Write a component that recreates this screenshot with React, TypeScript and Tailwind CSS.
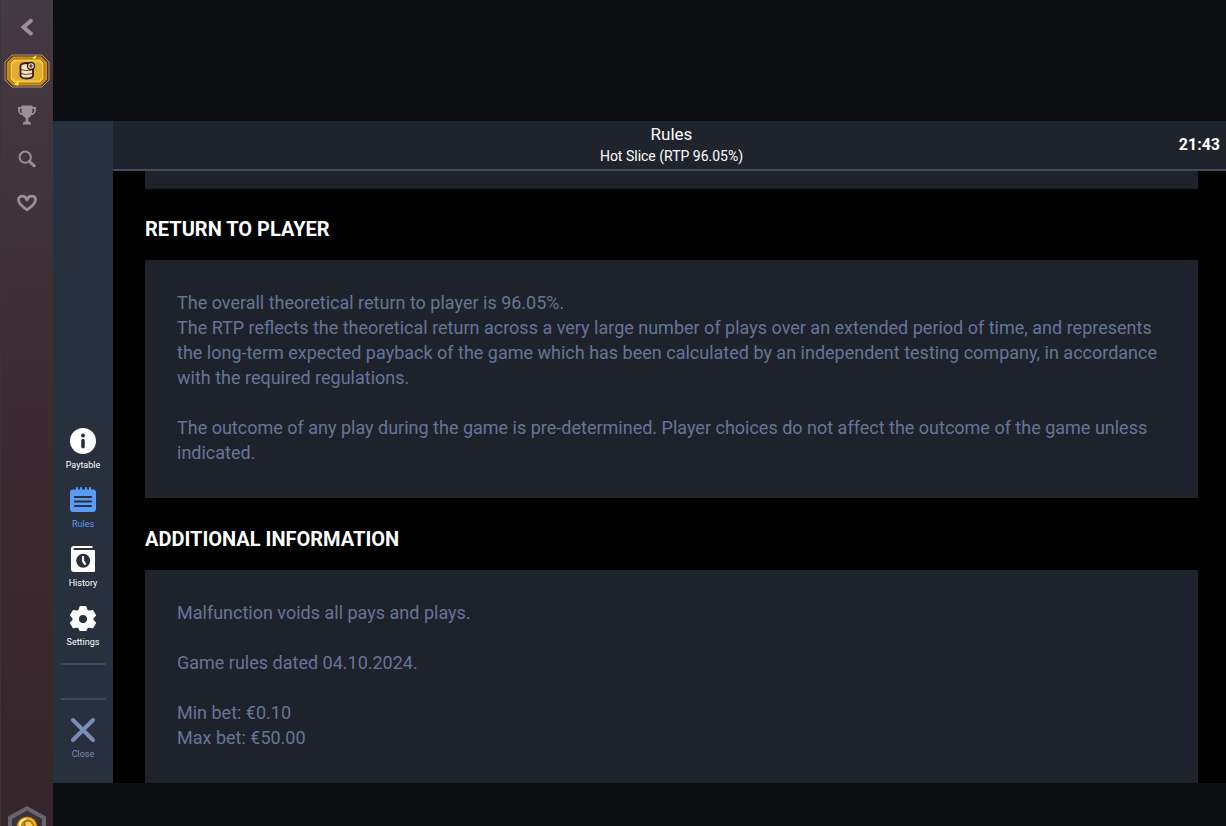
import type { ReactNode } from 'react';

const RULES_RTP = '96.05%';

function RailButton({ label, children }: { label: string; children: ReactNode }) {
  return (
    <button type="button" aria-label={label} className="flex h-11 w-full items-center justify-center text-[#9b8f99]">
      {children}
    </button>
  );
}

function Rail() {
  return (
    <nav className="flex w-[53px] shrink-0 flex-col items-center overflow-hidden border-l border-[#3a3439] bg-linear-to-b from-[#443a43] via-[#3c2b32] to-[#35262b] pt-[5px]">
      <RailButton label="Back">
        <svg width="14" height="18" viewBox="0 0 14 18" fill="none" stroke="currentColor" strokeWidth="4" strokeLinecap="round">
          <path d="M10.800 2.800 3.500 9.200l7.300 6.200" />
        </svg>
      </RailButton>
      <RailButton label="Rewards">
        <svg width="46" height="34" viewBox="0 0 46 34">
          <path d="M8 1h30l7 7v18l-7 7H8l-7-7V8z" fill="#5d3515" stroke="#a9968a" />
          <path d="M9 2.500h28l6 6v17l-6 6H9l-6-6v-17z" fill="#c98f1c" />
          <path d="M10 5h26l4 4v16l-4 4H10l-4-4V9z" fill="#f3cb45" stroke="#a56c12" />
          <path d="M11 7.500h24l3 3v13l-3 3H11l-3-3v-13z" fill="#dfb030" />
          <path d="m28 4 5-3-2 4zM10 30l5-3-1 5z" fill="#fff04a" />
          <path d="M16.500 11.500q1-2.500 6.500-2.500l6 2v11q-1.500 2.500-6.500 2.500t-6-2.500z" fill="#f8e3bd" stroke="#351912" strokeWidth="1.800" />
          <path d="M17 15.500q4 2 10 .5M17 19.500q5 2 11 0" fill="none" stroke="#6d3f28" />
          <circle cx="27" cy="12" r="3.500" fill="#f8e3bd" stroke="#351912" strokeWidth="1.400" />
          <path d="M27 10.300v3.400M25.300 12h3.400" stroke="#351912" strokeWidth="1.200" />
        </svg>
      </RailButton>
      <RailButton label="Tournaments">
        <svg width="20" height="20" viewBox="0 0 20 20" fill="currentColor">
          <path d="M4.500.5h11v1.500H19v3.100c0 3-2 4.900-4.700 5.200-.7 1.400-1.700 2.300-3 2.700v3.500h1.200l1.500 1.500v1.500H6V18l1.500-1.500h1.200V13c-1.300-.4-2.300-1.300-3-2.700C3 10 1 8.100 1 5.100V2h3.500zM2.800 3.800v1.400c0 1.500.8 2.600 2.300 3-.4-1.300-.6-2.700-.6-4.400zm12.700 0c0 1.700-.2 3.100-.6 4.400 1.500-.4 2.300-1.500 2.300-3V3.800z" />
        </svg>
      </RailButton>
      <RailButton label="Search">
        <svg width="18" height="18" viewBox="0 0 18 18" fill="none" stroke="currentColor">
          <circle cx="7.200" cy="7.200" r="5.600" strokeWidth="2" />
          <path d="m11.500 11.500 4.700 4.300" strokeWidth="3" strokeLinecap="round" />
        </svg>
      </RailButton>
      <RailButton label="Favourites">
        <svg width="22" height="18" viewBox="0 0 22 18" fill="none" stroke="currentColor" strokeWidth="2.800" strokeLinejoin="round">
          <path d="M11 15.800C7.500 13.500 2.500 9.600 2.500 5.800c0-2.100 1.500-3.600 3.700-3.600C8.500 2.200 10.300 3.700 11 6c.7-2.300 2.500-3.800 4.800-3.800 2.200 0 3.700 1.500 3.700 3.600 0 3.800-5 7.700-8.500 10z" />
        </svg>
      </RailButton>
      <button type="button" aria-label="Coins" className="mt-auto h-5 overflow-hidden">
        <svg width="38" height="42" viewBox="0 0 38 42">
          <path d="M19 0 38 10.500v21L19 42 0 31.500v-21z" fill="#68636f" />
          <path d="M19 4.500 34 13v16.500L19 38 4 29.500V13z" fill="#37333f" />
          <circle cx="19" cy="21" r="10.500" fill="#efb02a" stroke="#6d3b0c" />
          <circle cx="19" cy="21" r="7.500" fill="#c98416" />
          <path d="M12 20q0-6 6-7" fill="none" stroke="#fff0a0" strokeWidth="2" />
          <path d="M17 15h5l4 5v5h-5l-4-3z" fill="#f6cd56" stroke="#8a520f" />
        </svg>
      </button>
    </nav>
  );
}

function MenuButton({ label, className, children }: { label: string; className?: string; children: ReactNode }) {
  return (
    <button type="button" className={`flex w-full flex-col items-center gap-[5px] ${className ?? ''}`}>
      <svg width="26" height="26" viewBox="0 0 26 26" fill="currentColor">
        {children}
      </svg>
      <span className="text-[9px] leading-3">{label}</span>
    </button>
  );
}

function GameMenu() {
  return (
    <nav className="flex w-[60px] shrink-0 flex-col items-center justify-end bg-[#282f3d] pb-[23px] text-white">
      <div className="flex w-full flex-col gap-4">
        <MenuButton label="Paytable">
          <circle cx="13" cy="13" r="13" />
          <circle cx="13" cy="7.500" r="2" fill="#282f3d" />
          <path d="M13 12.500v6.300" stroke="#282f3d" strokeWidth="3.600" strokeLinecap="round" />
        </MenuButton>
        <MenuButton label="Rules" className="text-[#5a9bf5]">
          <path d="M3 2.500h20q3 0 3 3V22q0 3-3 3H3q-3 0-3-3V5.500q0-3 3-3z" />
          <path d="M7 1v3M11 1v3M16 1v3M20 1v3" stroke="currentColor" strokeWidth="2" strokeLinecap="round" />
          <path d="M5 10h16M5 14.500h16M5 19h16" stroke="#282f3d" strokeWidth="2.200" strokeLinecap="round" />
        </MenuButton>
        <MenuButton label="History">
          <path d="M4 0h18.500v2H4.500q-1 0-1 1t1 1H24q1 0 1 1v20q0 1-1 1H4q-3 0-3-3V3q0-3 3-3z" />
          <path d="M4 2.400h18v1.200H4z" fill="#282f3d" />
          <circle cx="13.200" cy="14.800" r="7" fill="#282f3d" />
          <path d="M13 11v4l2 2.800" fill="none" stroke="currentColor" strokeWidth="2.200" strokeLinecap="round" />
        </MenuButton>
        <MenuButton label="Settings">
          <path
            d="M10.500 2h5l1.200 3.500 2 1.200 3.800-.8 2.500 4.300-2.500 2.700v2.400l2.500 2.700-2.500 4.300-3.800-.8-2 1.200-1.200 2.500h-5l-1.200-2.500-2-1.200-3.800.8L1 18l2.500-2.700v-2.400L1 10.200l2.500-4.300 3.800.8 2-1.200z"
            stroke="currentColor"
            strokeWidth="2"
            strokeLinejoin="round"
          />
          <circle cx="13" cy="14" r="4" fill="#282f3d" />
        </MenuButton>
      </div>
      <div className="mt-[15px] mb-[17px] h-[37px] w-[45px] border-y-2 border-[#3d485c]" />
      <MenuButton label="Close" className="text-[#7a8cb8]">
        <path d="m3 3 20 20M23 3 3 23" stroke="currentColor" strokeWidth="4" strokeLinecap="round" />
      </MenuButton>
    </nav>
  );
}

function RulesSection({ title, children }: { title: string; children: ReactNode }) {
  return (
    <section>
      <h2 className="pt-7 pb-[19px] text-[20px] leading-6 font-bold text-white">{title}</h2>
      <div className="space-y-[25px] bg-[#1e222b] px-8 pt-[30px] pb-[33px] text-[18px] leading-[25px] text-[#667599]">
        {children}
      </div>
    </section>
  );
}

export default function App() {
  return (
    <div className="flex h-screen overflow-hidden bg-[#0c0e11] font-[Roboto,sans-serif]">
      <Rail />
      <main className="flex min-w-0 flex-1 pt-[121px] pb-[43px]">
        <GameMenu />
        <div className="flex min-w-0 flex-1 flex-col bg-black">
          <header className="grid h-[50px] shrink-0 grid-cols-[1fr_auto_1fr] items-center border-b-2 border-[#414d5f] bg-[#1e232c] pr-[6px] pl-[10px] text-white">
            <div className="col-start-2 pb-[2px] text-center">
              <h1 className="text-[17px] leading-6">Rules</h1>
              <p className="text-[14px] leading-5">Hot Slice (RTP {RULES_RTP})</p>
            </div>
            <time className="text-right text-[16px] leading-6 font-bold">21:43</time>
          </header>
          <div className="flex min-h-0 flex-1 flex-col overflow-hidden pr-7 pl-8">
            <div className="h-[18px] shrink-0 bg-[#1e222b]" />
            <div className="flex flex-col gap-px">
              <RulesSection title="RETURN TO PLAYER">
                <p>
                  The overall theoretical return to player is {RULES_RTP}.
                  <br />
                  The RTP reflects the theoretical return across a very large number of plays over an extended period
                  of time, and represents the long-term expected payback of the game which has been calculated by an
                  independent testing company, in accordance with the required regulations.
                </p>
                <p>
                  The outcome of any play during the game is pre-determined. Player choices do not affect the outcome
                  of the game unless indicated.
                </p>
              </RulesSection>
              <RulesSection title="ADDITIONAL INFORMATION">
                <p>Malfunction voids all pays and plays.</p>
                <p>Game rules dated 04.10.2024.</p>
                <p>
                  Min bet: €0.10
                  <br />
                  Max bet: €50.00
                </p>
              </RulesSection>
            </div>
          </div>
        </div>
      </main>
    </div>
  );
}
